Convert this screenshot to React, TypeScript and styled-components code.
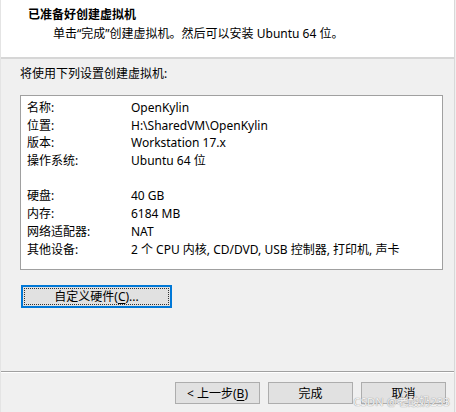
import styled, { createGlobalStyle } from "styled-components";

const GlobalStyle = createGlobalStyle`
  html, body {
    margin: 0;
    padding: 0;
    background: #f0f0f0;
  }
  body {
    font-family: "Noto Sans", "Noto Sans CJK SC", sans-serif;
    font-size: 12px;
    color: #000;
  }
  * {
    box-sizing: border-box;
  }
`;

const Window = styled.div`
  position: relative;
  width: 455px;
  height: 412px;
  background: #f0f0f0;
  border-right: 1px solid #d8d8d8;
  border-left: 1px solid #e4e4e4;
  display: flex;
  flex-direction: column;
  overflow: hidden;
`;

const Header = styled.div`
  height: 59px;
  flex-shrink: 0;
  background: #fff;
  border-bottom: 2px solid #d6d6d6;
  padding: 6px 0 0 27px;
`;

const Title = styled.div`
  font-weight: bold;
  line-height: 17px;
`;

const Subtitle = styled.div`
  margin-top: 2px;
  padding-left: 25px;
  line-height: 17px;
`;

const Body = styled.div`
  flex: 1;
  padding: 6px 11px 0 19px;
`;

const Intro = styled.div`
  line-height: 17px;
`;

const ListBox = styled.div`
  margin-top: 13px;
  height: 175px;
  background: #fff;
  border: 1px solid #a0a0a0;
  padding: 3px 0 0 6px;
`;

const Row = styled.div<{ $gap?: boolean }>`
  display: flex;
  height: 17.7px;
  line-height: 17.7px;
  margin-top: ${(p) => (p.$gap ? "17.7px" : "0")};
  white-space: nowrap;
`;

const Label = styled.span`
  width: 104px;
  flex-shrink: 0;
`;

const Value = styled.span``;

const Button = styled.button<{ $width: number; $height?: number; $focused?: boolean }>`
  width: ${(p) => p.$width}px;
  height: ${(p) => p.$height ?? 23}px;
  padding: 0;
  font: inherit;
  color: #000;
  background: #e1e1e1;
  border: ${(p) => (p.$focused ? "2px solid #0078d7" : "1px solid #adadad")};
  outline: ${(p) => (p.$focused ? "1px dotted #333" : "none")};
  outline-offset: -4px;
  line-height: 17px;
  cursor: default;
  u {
    text-decoration: underline;
    text-underline-offset: 2px;
  }
`;

const CustomRow = styled.div`
  margin-top: 15px;
  padding-left: 1px;
`;

const Footer = styled.div`
  height: 41px;
  flex-shrink: 0;
  border-top: 1px solid #a0a0a0;
  box-shadow: inset 0 1px 0 #fff;
  display: flex;
  justify-content: flex-end;
  align-items: flex-start;
  gap: 8px;
  padding: 10px 8px 0 0;
`;

const Watermark = styled.div`
  position: absolute;
  right: 4px;
  bottom: 3px;
  font-size: 11px;
  color: rgba(255, 255, 255, 0.9);
  text-shadow: 0 0 1px #9a9a9a, 0 0 1px #9a9a9a;
  letter-spacing: 0.2px;
`;

const settings = [
  { label: "名称:", value: "OpenKylin" },
  { label: "位置:", value: "H:\\SharedVM\\OpenKylin" },
  { label: "版本:", value: "Workstation 17.x" },
  { label: "操作系统:", value: "Ubuntu 64 位" },
  { label: "硬盘:", value: "40 GB", gap: true },
  { label: "内存:", value: "6184 MB" },
  { label: "网络适配器:", value: "NAT" },
  { label: "其他设备:", value: "2 个 CPU 内核, CD/DVD, USB 控制器, 打印机, 声卡" },
];

export default function App() {
  return (
    <>
      <GlobalStyle />
      <Window>
        <Header>
          <Title>已准备好创建虚拟机</Title>
          <Subtitle>单击“完成”创建虚拟机。然后可以安装 Ubuntu 64 位。</Subtitle>
        </Header>
        <Body>
          <Intro>将使用下列设置创建虚拟机:</Intro>
          <ListBox>
            {settings.map((s) => (
              <Row key={s.label} $gap={s.gap}>
                <Label>{s.label}</Label>
                <Value>{s.value}</Value>
              </Row>
            ))}
          </ListBox>
          <CustomRow>
            <Button $width={151} $focused>
              自定义硬件(<u>C</u>)...
            </Button>
          </CustomRow>
        </Body>
        <Footer>
          <Button $width={85} $height={22}>
            &lt; 上一步(<u>B</u>)
          </Button>
          <Button $width={85} $height={22}>完成</Button>
          <Button $width={85} $height={22}>取消</Button>
        </Footer>
        <Watermark>CSDN @老酸奶233</Watermark>
      </Window>
    </>
  );
}
